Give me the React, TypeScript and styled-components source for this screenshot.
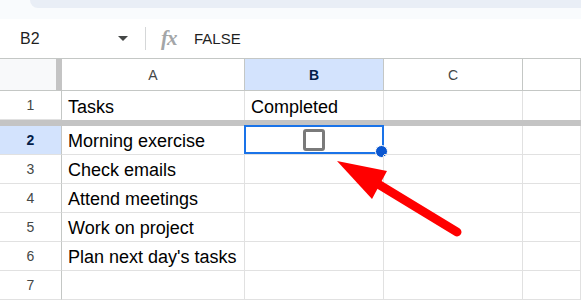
import styled, { createGlobalStyle } from 'styled-components';

const GlobalStyle = createGlobalStyle`
  html, body {
    margin: 0;
    padding: 0;
    background: #ffffff;
  }
  body {
    font-family: "Liberation Sans", Arial, sans-serif;
  }
`;

const StyledPage = styled.div`
  position: relative;
  width: 581px;
  height: 300px;
  overflow: hidden;
  background: #ffffff;
`;

const StyledTopStrip = styled.div`
  height: 19px;
  background: #f9fbfd;
`;

const StyledTab = styled.div`
  margin-left: 30px;
  height: 8px;
  background: #e9eef6;
  border-bottom-left-radius: 16px;
`;

const StyledFormulaBar = styled.div`
  height: 39px;
  display: flex;
  align-items: center;
  background: #ffffff;
`;

const StyledNameBox = styled.div`
  width: 133px;
  padding-left: 20px;
  box-sizing: border-box;
  display: flex;
  align-items: center;
  justify-content: space-between;
  font-size: 16px;
  color: #1f1f1f;
`;

const StyledCaret = styled.span`
  width: 0;
  height: 0;
  margin-right: 5px;
  border-left: 5px solid transparent;
  border-right: 5px solid transparent;
  border-top: 5px solid #444746;
`;

const StyledDivider = styled.div`
  width: 1px;
  height: 23px;
  margin-left: 12px;
  background: #d5d7d8;
`;

const StyledFx = styled.span`
  margin-left: 15px;
  width: 21px;
  font-family: "Liberation Serif", serif;
  font-style: italic;
  font-weight: 700;
  font-size: 21px;
  color: #a3a6a8;
  letter-spacing: -1px;
`;

const StyledFormulaValue = styled.span`
  margin-left: 12px;
  font-size: 15px;
  color: #1f1f1f;
`;

const StyledGrid = styled.div`
  display: grid;
  grid-template-columns: 62px 183px 139px 139px 58px;
  border-top: 1px solid #c4c7c5;
`;

const StyledCorner = styled.div`
  height: 32px;
  box-sizing: border-box;
  background: #f8f9fa;
  border-right: 6px solid #c4c4c4;
  border-bottom: 1px solid #c4c7c5;
`;

const StyledColHeader = styled.div<{ $selected?: boolean }>`
  height: 32px;
  box-sizing: border-box;
  display: flex;
  align-items: center;
  justify-content: center;
  font-size: 14px;
  background: ${({ $selected }) => ($selected ? '#d3e3fd' : '#ffffff')};
  color: ${({ $selected }) => ($selected ? '#041e49' : '#444746')};
  font-weight: ${({ $selected }) => ($selected ? 700 : 400)};
  border-right: 1px solid #c4c7c5;
  border-bottom: 1px solid #c4c7c5;
`;

const StyledRowHeader = styled.div<{ $selected?: boolean }>`
  height: 29px;
  box-sizing: border-box;
  display: flex;
  align-items: center;
  justify-content: center;
  font-size: 14px;
  background: ${({ $selected }) => ($selected ? '#d3e3fd' : '#ffffff')};
  color: ${({ $selected }) => ($selected ? '#041e49' : '#444746')};
  font-weight: ${({ $selected }) => ($selected ? 700 : 400)};
  border-right: 1px solid #c4c7c5;
  border-bottom: 1px solid #e1e1e1;
`;

const StyledCell = styled.div<{ $noBottom?: boolean }>`
  position: relative;
  height: 29px;
  box-sizing: border-box;
  display: flex;
  align-items: flex-end;
  padding: 0 0 2px 6px;
  font-size: 18px;
  color: #000000;
  white-space: nowrap;
  border-right: 1px solid #e1e1e1;
  border-bottom: ${({ $noBottom }) => ($noBottom ? 'none' : '1px solid #e1e1e1')};
`;

const StyledCheckCell = styled(StyledCell)`
  align-items: center;
  padding: 0;
`;

const StyledFreeze = styled.div`
  grid-column: 1 / -1;
  height: 6px;
  background: #c4c4c4;
`;

const StyledSelection = styled.div`
  position: absolute;
  inset: -1px -1px 0 -1px;
  border: 2px solid #1a73e8;
  pointer-events: none;
`;

const StyledHandle = styled.div`
  position: absolute;
  right: -6px;
  bottom: -6px;
  width: 11px;
  height: 11px;
  border-radius: 50%;
  background: #0b57d0;
  border: 1px solid #ffffff;
`;

const StyledCheckbox = styled.div`
  margin: 0 auto;
  width: 22px;
  height: 22px;
  box-sizing: border-box;
  border: 3px solid #7a7a7a;
  border-radius: 3px;
`;

const StyledArrow = styled.svg`
  position: absolute;
  left: 0;
  top: 0;
  pointer-events: none;
`;

const tasks = [
  'Morning exercise',
  'Check emails',
  'Attend meetings',
  'Work on project',
  "Plan next day's tasks",
  '',
];

export default function App() {
  return (
    <StyledPage>
      <GlobalStyle />
      <StyledTopStrip>
        <StyledTab />
      </StyledTopStrip>
      <StyledFormulaBar>
        <StyledNameBox>
          B2
          <StyledCaret />
        </StyledNameBox>
        <StyledDivider />
        <StyledFx>fx</StyledFx>
        <StyledFormulaValue>FALSE</StyledFormulaValue>
      </StyledFormulaBar>
      <StyledGrid>
        <StyledCorner />
        <StyledColHeader>A</StyledColHeader>
        <StyledColHeader $selected>B</StyledColHeader>
        <StyledColHeader>C</StyledColHeader>
        <StyledColHeader />

        <StyledRowHeader>1</StyledRowHeader>
        <StyledCell $noBottom>Tasks</StyledCell>
        <StyledCell $noBottom>Completed</StyledCell>
        <StyledCell $noBottom />
        <StyledCell $noBottom />
        <StyledFreeze />

        {tasks.map((task, i) => {
          const row = i + 2;
          const selected = row === 2;
          return [
            <StyledRowHeader key={`h${row}`} $selected={selected}>
              {row}
            </StyledRowHeader>,
            <StyledCell key={`a${row}`}>{task}</StyledCell>,
            selected ? (
              <StyledCheckCell key={`b${row}`}>
                <StyledCheckbox />
                <StyledSelection>
                  <StyledHandle />
                </StyledSelection>
              </StyledCheckCell>
            ) : (
              <StyledCell key={`b${row}`} />
            ),
            <StyledCell key={`c${row}`} />,
            <StyledCell key={`d${row}`} />,
          ];
        })}
      </StyledGrid>
      <StyledArrow width="581" height="300" viewBox="0 0 581 300">
        <line x1="378" y1="184" x2="457" y2="232" stroke="#ff0000" strokeWidth="9" strokeLinecap="round" />
        <polygon points="337,161 387,171 372,199" fill="#ff0000" />
      </StyledArrow>
    </StyledPage>
  );
}
